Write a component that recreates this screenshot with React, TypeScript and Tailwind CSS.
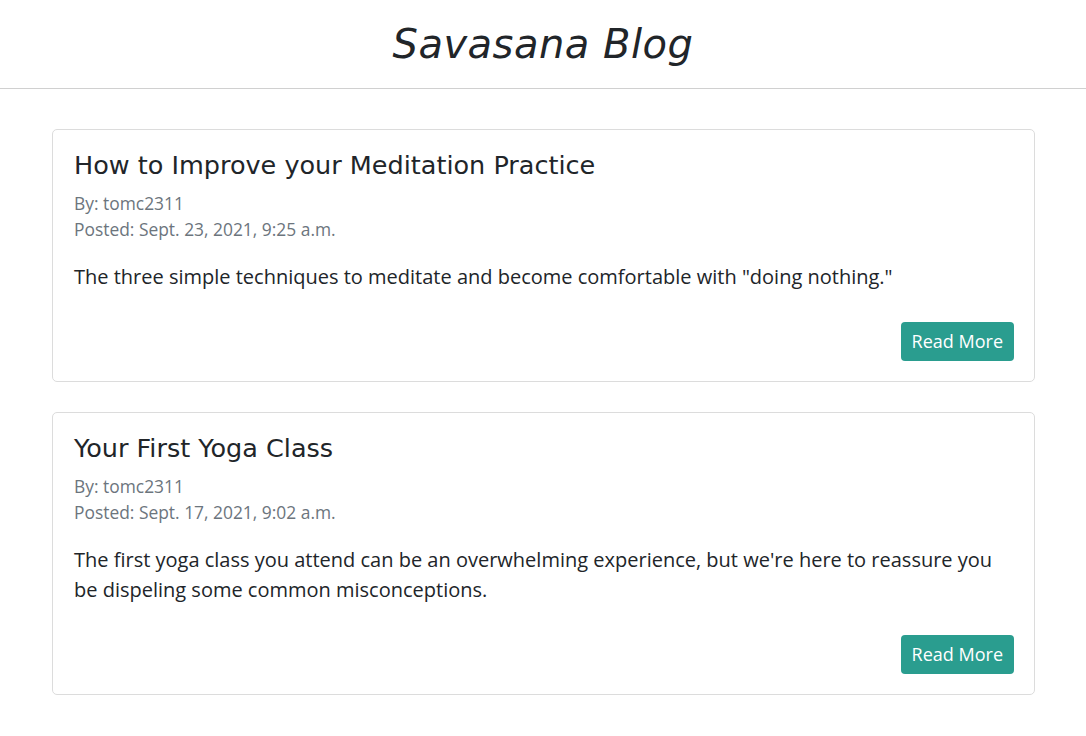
const posts = [
  {
    title: 'How to Improve your Meditation Practice',
    author: 'tomc2311',
    posted: 'Sept. 23, 2021, 9:25 a.m.',
    excerpt: 'The three simple techniques to meditate and become comfortable with "doing nothing."',
  },
  {
    title: 'Your First Yoga Class',
    author: 'tomc2311',
    posted: 'Sept. 17, 2021, 9:02 a.m.',
    excerpt:
      "The first yoga class you attend can be an overwhelming experience, but we're here to reassure you be dispeling some common misconceptions.",
  },
];

export default function App() {
  return (
    <div className="min-h-screen bg-white font-['Open_Sans',sans-serif] text-[#212529]">
      <header className="h-[89px] border-b border-[#d0d0d0] flex items-center justify-center">
        <h1 className="font-['DejaVu_Sans',sans-serif] italic font-light text-[40px] tracking-[0.5px] text-[#212529] -mt-[1px]">
          Savasana Blog
        </h1>
      </header>

      <main className="pl-[52px] pr-[51px] pt-[40px] flex flex-col gap-[30px]">
        {posts.map((p) => (
          <article key={p.title} className="border border-[#dcdcdc] rounded-[5px] pl-[21px] pr-[20px] pt-[20px] pb-[20px] flex flex-col">
            <h2 className="font-['DejaVu_Sans',sans-serif] text-[25.5px] leading-[30px] text-[#212529] mb-[10px]">
              {p.title}
            </h2>
            <p className="text-[17.4px] leading-[26px] text-[#6c757d]">By: {p.author}</p>
            <p className="text-[17.4px] leading-[26px] text-[#6c757d]">Posted: {p.posted}</p>
            <p className="text-[20px] leading-[30px] mt-[20px] pr-[20px]">{p.excerpt}</p>
            <div className="flex justify-end mt-[30px]">
              <button className="bg-[#2a9d8f] text-white text-[18px] leading-[27px] px-[11px] h-[39px] rounded-[4px]">
                Read More
              </button>
            </div>
          </article>
        ))}
      </main>
    </div>
  );
}
